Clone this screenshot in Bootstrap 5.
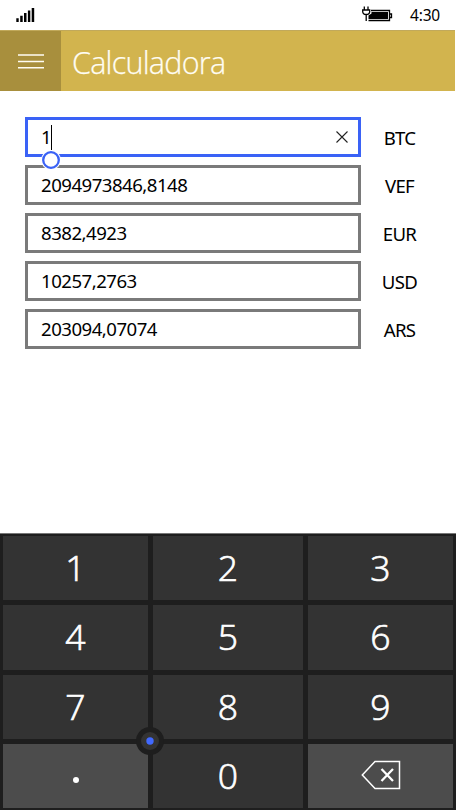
<!DOCTYPE html>
<html lang="es">
<head>
<meta charset="utf-8">
<meta name="viewport" content="width=device-width, initial-scale=1">
<title>Calculadora</title>
<link href="https://cdn.jsdelivr.net/npm/bootstrap@5.3.0/dist/css/bootstrap.min.css" rel="stylesheet">
<style>
body{font-family:"Noto Sans","Open Sans",sans-serif;color:#000;background:#fff;height:810px;overflow:hidden}
svg{display:block}
.status{height:30px;padding:0 16px}
.clock{font-size:15.5px;line-height:30px;letter-spacing:-.2px}
.topbar{height:61px;background:#d2b44e;border-top:1px solid #c1a95b;margin-right:1px}
.burger{width:61px;background:#a88f3d;border:0}
.app-title{font-family:"Open Sans","Noto Sans",sans-serif;font-weight:300;font-size:30.5px;line-height:60px;letter-spacing:-.75px;color:#fffdf3;-webkit-text-stroke:.25px #fffdf3;padding:1px 0 0 11px}
.rates{padding:26px 0 0 25px;gap:8px}
.rate{height:40px}
.amount{width:336px;height:40px;border:3px solid #7a7a7a;border-radius:0;padding:0 13px;color:#000;font-size:18.6px;line-height:34px;letter-spacing:-.5px}
.amount.active{border-color:#3a62f6;padding-right:10px}
.caret{width:1px;height:25px;background:#000}
.unit{width:77px;font-size:18.6px;line-height:42px;letter-spacing:-.7px}
.handle{left:16px;top:33px}
.keypad{height:277px;display:grid;grid-template-columns:145px 150px 145px;grid-template-rows:repeat(4,64.3px);gap:5px;padding:2px 3px;background:#1e1e1e;border-top:1px solid #777}
.key{background:#333;border:0;border-radius:0;color:#fff;font-family:"Open Sans","Noto Sans",sans-serif;font-weight:300;-webkit-text-stroke:.7px #fff;font-size:35.5px;line-height:60px;padding:0 0 2px}
.key-alt{background:#4c4c4c}
.dot{width:6px;height:6px;border-radius:50%;background:#fff;margin-top:9px}
.nub{left:136px;top:193px}
</style>
</head>
<body class="d-flex flex-column">
<div class="status d-flex align-items-center justify-content-between flex-shrink-0">
  <svg width="19" height="30" viewBox="0 0 19 30"><path d="M.3 18.3h2.4V22H.3zM4.2 15.7h2.5V22H4.2zM8 13h2.5v9H8zM11.9 10.5h2.4V22h-2.4zM15.7 8h2.5v14h-2.5z"/></svg>
  <div class="d-flex">
    <svg class="me-3" width="32" height="30" viewBox="0 0 32 30" fill="none" stroke="#000"><path d="M9 10.500h18.500v10H6.500M27.500 14h2v3.500h-2" stroke-width="1.300"/><path d="M9.500 12H26v7H6.500v-3.500l3-2z" fill="#000" stroke="none"/><path d="M2.300 6.500v3.500M6 6.500v3.500M.700 10h7v1.500q0 3-3.500 3t-3.500-3zM4.200 14.500v6.500" stroke-width="1.300"/></svg>
    <span class="clock">4:30</span>
  </div>
</div>
<header class="topbar d-flex flex-shrink-0">
  <button class="burger d-flex align-items-center justify-content-center p-0" aria-label="Menú"><svg width="26" height="18" viewBox="0 0 26 18"><path d="M0 3h26M0 9.500h26M0 15.800h26" stroke="#fffdf3" stroke-width="1.500"/></svg></button>
  <h1 class="app-title m-0">Calculadora</h1>
</header>
<main class="rates d-flex flex-column">
  <div class="rate d-flex position-relative">
    <div class="amount active form-control d-flex align-items-center">
      <span>1</span><span class="caret"></span>
      <svg class="ms-auto" width="12" height="12" viewBox="0 0 12 12"><path d="M.5.5l11 11M11.500.500l-11 11" stroke="#222" stroke-width="1.100"/></svg>
    </div>
    <span class="unit text-center">BTC</span>
    <svg class="handle position-absolute z-1" width="20" height="20" viewBox="0 0 20 20"><circle cx="10" cy="10" r="10" fill="#fff"/><circle cx="10" cy="10" r="7.800" fill="#fff" stroke="#3a62f6" stroke-width="2.300"/></svg>
  </div>
  <div class="rate d-flex"><div class="amount form-control">2094973846,8148</div><span class="unit text-center">VEF</span></div>
  <div class="rate d-flex"><div class="amount form-control">8382,4923</div><span class="unit text-center">EUR</span></div>
  <div class="rate d-flex"><div class="amount form-control">10257,2763</div><span class="unit text-center">USD</span></div>
  <div class="rate d-flex"><div class="amount form-control">203094,07074</div><span class="unit text-center">ARS</span></div>
</main>
<section class="keypad mt-auto position-relative flex-shrink-0">
  <button class="key">1</button><button class="key">2</button><button class="key">3</button>
  <button class="key">4</button><button class="key">5</button><button class="key">6</button>
  <button class="key">7</button><button class="key">8</button><button class="key">9</button>
  <button class="key key-alt d-flex align-items-center justify-content-center" aria-label="."><span class="dot"></span></button>
  <button class="key">0</button>
  <button class="key key-alt d-flex align-items-center justify-content-center" aria-label="Borrar"><svg width="40" height="30" viewBox="0 0 40 30" fill="none" stroke="#fff"><path d="M1.300 15 14 1.500h24.500v27H14z" stroke-width="1.500"/><path d="M20.500 9 32 21M32 9 20.500 21" stroke-width="2.300"/></svg></button>
  <svg class="nub position-absolute" width="28" height="28" viewBox="0 0 28 28"><circle cx="14" cy="14" r="14" fill="#1e1e1e"/><circle cx="14" cy="14" r="9" fill="#333"/><circle cx="14" cy="14" r="3.700" fill="#4169ff"/></svg>
</section>
<script src="https://cdn.jsdelivr.net/npm/bootstrap@5.3.0/dist/js/bootstrap.bundle.min.js"></script>
</body>
</html>
